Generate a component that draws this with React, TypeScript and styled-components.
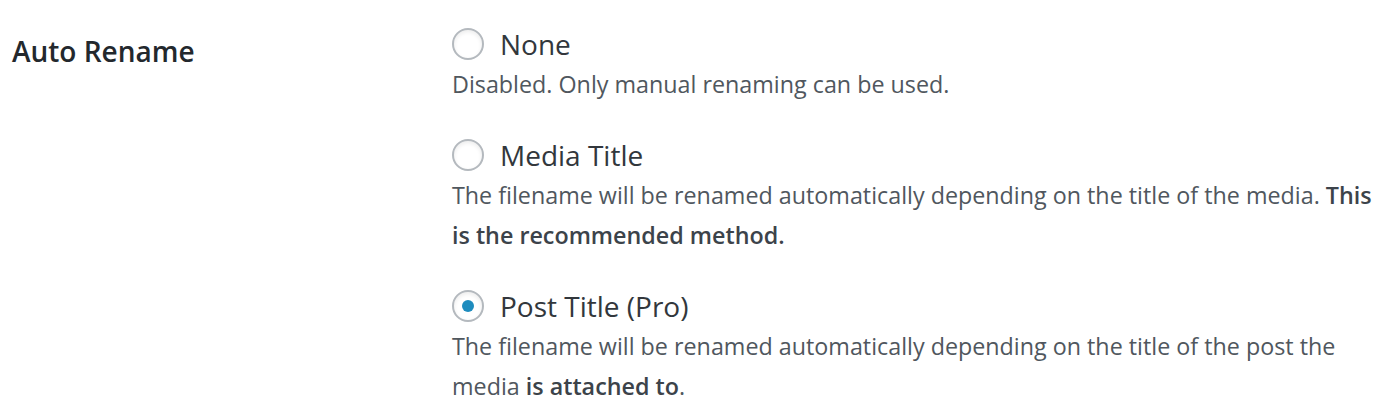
import { createGlobalStyle, styled } from "styled-components";

const GlobalStyle = createGlobalStyle`
  html, body {
    margin: 0;
    padding: 0;
    background: #fff;
  }
  body {
    font-family: "Open Sans", "Liberation Sans", sans-serif;
    -webkit-font-smoothing: antialiased;
  }
`;

const Table = styled.div`
  display: grid;
  grid-template-columns: 440px 1fr;
  padding: 0 12px;
`;

const Heading = styled.div`
  padding-top: 30px;
  color: #23282d;
  font-size: 28px;
  font-weight: 600;
  line-height: 42px;
`;

const Options = styled.div`
  display: flex;
  flex-direction: column;
  gap: 32px;
  padding-top: 25px;
`;

const Option = styled.div`
  display: flex;
  flex-direction: column;
`;

const Label = styled.label`
  display: flex;
  align-items: center;
  gap: 16px;
  color: #32373c;
  font-size: 28px;
  line-height: 38px;
`;

const Radio = styled.span<{ $checked?: boolean }>`
  position: relative;
  width: 32px;
  height: 32px;
  box-sizing: border-box;
  border-radius: 50%;
  border: 2px solid #b4b9be;
  background: #fff;
  box-shadow: inset 0 2px 4px rgba(0, 0, 0, 0.08);
  flex-shrink: 0;

  &::after {
    content: "";
    display: ${(p) => (p.$checked ? "block" : "none")};
    position: absolute;
    left: 8px;
    top: 8px;
    width: 12px;
    height: 12px;
    border-radius: 50%;
    background: #1e8cbe;
  }
`;

const Description = styled.p`
  margin: 1px 0 0;
  color: #50575e;
  font-size: 23.3px;
  line-height: 40px;
  max-width: 928px;

  strong {
    color: #3c434a;
    font-weight: 600;
  }
`;

const options = [
  {
    label: "None",
    checked: false,
    description: <>Disabled. Only manual renaming can be used.</>,
  },
  {
    label: "Media Title",
    checked: false,
    description: (
      <>
        The filename will be renamed automatically depending on the title of the media.{" "}
        <strong>This is the recommended method.</strong>
      </>
    ),
  },
  {
    label: "Post Title (Pro)",
    checked: true,
    description: (
      <>
        The filename will be renamed automatically depending on the title of the post the
        media <strong>is attached to</strong>.
      </>
    ),
  },
];

export default function App() {
  return (
    <>
      <GlobalStyle />
      <Table>
        <Heading>Auto Rename</Heading>
        <Options>
          {options.map((o) => (
            <Option key={o.label}>
              <Label>
                <Radio $checked={o.checked} />
                {o.label}
              </Label>
              <Description>{o.description}</Description>
            </Option>
          ))}
        </Options>
      </Table>
    </>
  );
}
